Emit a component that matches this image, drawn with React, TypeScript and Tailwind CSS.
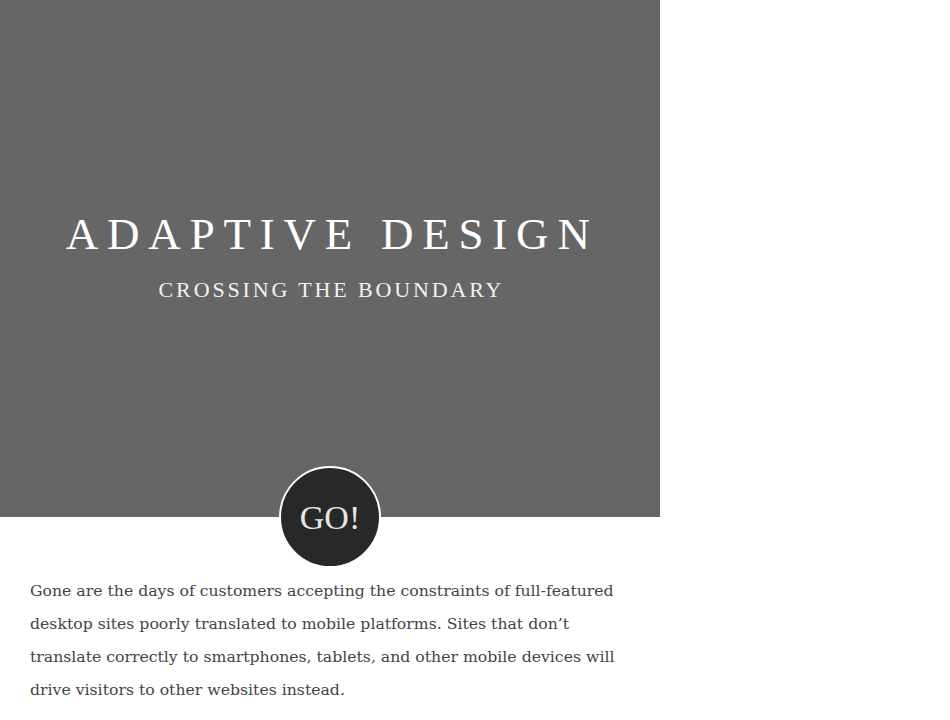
const App = () => {
  return (
    <div className="w-[950px] h-[720px] bg-white overflow-hidden">
      <div className="w-[660px]">
        {/* hero */}
        <section className="relative h-[517px] bg-[#666666] flex flex-col items-center pt-[207px]">
          <h1 className="text-white text-[45px] leading-[54px] tracking-[0.195em] pl-[0.1em] font-['Liberation_Serif',serif] font-normal">
            ADAPTIVE DESIGN
          </h1>
          <h2 className="mt-[15px] text-[#f2f2f2] text-[22px] leading-[28px] tracking-[0.13em] pl-[0.13em] font-['Liberation_Serif',serif] font-normal">
            CROSSING THE BOUNDARY
          </h2>
          <button className="absolute left-[279px] top-[466px] w-[102px] h-[102px] rounded-full bg-[#282828] border-2 border-white flex items-center justify-center">
            <span className="text-[#e6e6e6] text-[34px] leading-none font-['Liberation_Serif',serif] font-light pt-[2px]">
              GO!
            </span>
          </button>
        </section>
        {/* intro */}
        <p className="px-[30px] pt-[57px] text-[#444444] text-[15.7px] leading-[33px] font-['DejaVu_Serif',serif]">
          Gone are the days of customers accepting the constraints of full-featured desktop sites poorly
          translated to mobile platforms. Sites that don’t translate correctly to smartphones, tablets, and
          other mobile devices will drive visitors to other websites instead.
        </p>
      </div>
    </div>
  );
};
export default App;
